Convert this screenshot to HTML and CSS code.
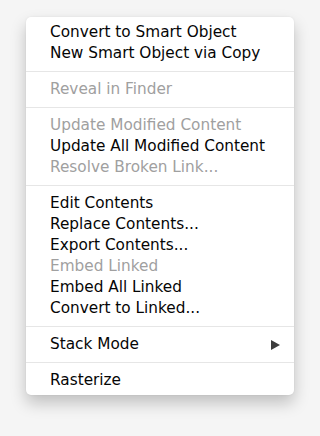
FILE: index.html
```html
<!DOCTYPE html>
<html lang="en">
<head>
    <meta charset="UTF-8">
    <meta name="viewport" content="width=device-width, initial-scale=1.0">
    <title>Smart Object menu</title>
    <link rel="stylesheet" href="styles.css">
</head>
<body>
    <!-- context menu -->
    <div class="menu">
        <div class="item">Convert to Smart Object</div>
        <div class="item">New Smart Object via Copy</div>
        <div class="sep"></div>
        <div class="item off">Reveal in Finder</div>
        <div class="sep"></div>
        <div class="item off">Update Modified Content</div>
        <div class="item">Update All Modified Content</div>
        <div class="item off">Resolve Broken Link...</div>
        <div class="sep"></div>
        <div class="item">Edit Contents</div>
        <div class="item">Replace Contents...</div>
        <div class="item">Export Contents...</div>
        <div class="item off">Embed Linked</div>
        <div class="item">Embed All Linked</div>
        <div class="item">Convert to Linked...</div>
        <div class="sep"></div>
        <div class="item sub">
            <span>Stack Mode</span>
            <span class="arrow"></span>
        </div>
        <div class="sep"></div>
        <div class="item">Rasterize</div>
    </div>
</body>
</html>
```

FILE: styles.css
```css
*{
    padding: 0;
    margin: 0;
    box-sizing: border-box;
}
body{
    height: 436px;
    padding: 17px 26px 0;
    background-color: rgb(245, 245, 245);
    font-family: "DejaVu Sans", "Liberation Sans", sans-serif;
}
.menu{
    width: 268px;
    padding: 5px 0 4px;
    background-color: #fff;
    border-radius: 5px;
    box-shadow: 0 8px 16px rgba(0, 0, 0, 0.22), 0 0 2px rgba(0, 0, 0, 0.08);
}
.item{
    padding: 0 14px 0 24px;
    height: 21px;
    line-height: 21px;
    font-size: 15.3px;
    color: rgb(5, 5, 5);
    white-space: nowrap;
}
.item.off{
    color: rgb(160, 160, 160);
}
.sub{
    display: flex;
    justify-content: space-between;
    align-items: center;
}
.arrow{
    width: 0;
    height: 0;
    border-top: 5px solid transparent;
    border-bottom: 5px solid transparent;
    border-left: 9px solid rgb(60, 60, 60);
}
.sep{
    height: 1px;
    margin: 7px 0;
    background-color: rgb(230, 230, 230);
}
```
